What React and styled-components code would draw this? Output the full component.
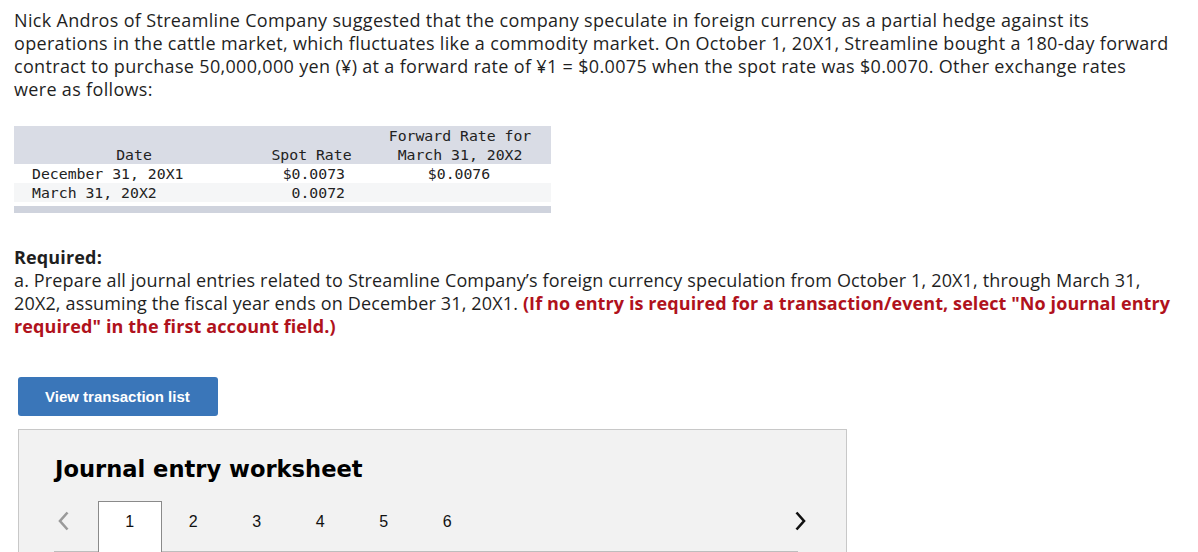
import React from 'react'
import styled, { createGlobalStyle } from 'styled-components'

const GlobalStyle = createGlobalStyle`
  body {
    margin: 0;
    background: #ffffff;
  }
`

const Page = styled.div`
  width: 1198px;
  height: 552px;
  overflow: hidden;
  padding: 9px 0 0 14px;
  box-sizing: border-box;
  font-family: 'Open Sans', Lato, sans-serif;
  color: #1f1f1f;
`

const Paragraph = styled.p`
  margin: 0;
  font-size: 18px;
  line-height: 23px;
  letter-spacing: 0.33px;
  white-space: nowrap;
`

const RatesTable = styled.table`
  margin-top: 25px;
  width: 537px;
  border-collapse: collapse;
  font-family: 'DejaVu Sans Mono', 'Liberation Mono', monospace;
  font-size: 14.8px;
  line-height: 19px;
  color: #222;
  border-bottom: 7px solid #cfd3dd;
`

const HeadRow = styled.tr`
  background: #d9dce5;
`

const HeadCell = styled.th`
  font-weight: normal;
  text-align: center;
  vertical-align: bottom;
  padding: 0;
  width: ${(p) => p.w}px;
`

const BodyRow = styled.tr`
  background: ${(p) => (p.shade ? '#f5f6f7' : '#ffffff')};
`

const Cell = styled.td`
  padding: 0;
  padding-left: ${(p) => p.pl || 0}px;
  padding-right: ${(p) => p.pr || 0}px;
  text-align: ${(p) => p.align || 'left'};
`

const SpacerRow = styled.tr`
  height: 7px;
  background: #ffffff;
`

const Required = styled.div`
  margin-top: 33px;
  font-size: 18px;
  line-height: 23px;
  letter-spacing: 0.15px;
  white-space: nowrap;
`

const Bold = styled.div`
  font-weight: 700;
`

const Red = styled.span`
  color: #b0121c;
  font-weight: 700;
  letter-spacing: 0.1px;
`

const Button = styled.button`
  display: block;
  margin: 39px 0 0 4px;
  width: 200px;
  height: 39px;
  border: none;
  border-radius: 3px;
  background: #3a76b9;
  color: #ffffff;
  font-family: 'Liberation Sans', Arial, sans-serif;
  font-weight: 700;
  font-size: 15px;
  text-align: left;
  padding: 0 0 0 27px;
`

const Worksheet = styled.div`
  margin: 13px 0 0 4px;
  width: 829px;
  height: 200px;
  box-sizing: border-box;
  background: #f2f2f2;
  border: 1px solid #c8c8c8;
  padding: 23px 48px 0 35px;
`

const Title = styled.h2`
  margin: 0 0 0 1px;
  font-family: 'DejaVu Sans', Verdana, sans-serif;
  font-weight: 700;
  font-size: 22.6px;
  line-height: 32px;
  color: #000;
`

const TabBar = styled.div`
  margin-top: 16px;
  display: flex;
  align-items: flex-end;
  height: 50px;
  border-bottom: 1px solid #bdbdbd;
`

const Arrow = styled.div`
  width: 44px;
  height: 50px;
  display: flex;
  align-items: flex-start;
  padding-top: 10px;
  justify-content: ${(p) => (p.right ? 'flex-end' : 'flex-start')};
  padding-left: ${(p) => (p.right ? 0 : 3)}px;
  box-sizing: border-box;
  margin-left: ${(p) => (p.right ? 'auto' : 0)};
  margin-right: ${(p) => (p.right ? '-9px' : 0)};
`

const Tab = styled.div`
  width: 63.5px;
  height: 51px;
  margin-bottom: -1px;
  box-sizing: border-box;
  display: flex;
  align-items: flex-start;
  justify-content: center;
  padding-top: 10px;
  font-family: 'Liberation Sans', Arial, sans-serif;
  font-size: 16px;
  line-height: 19px;
  color: #111;
  background: ${(p) => (p.active ? '#ffffff' : 'transparent')};
  border: 1px solid ${(p) => (p.active ? '#8a8a8a' : 'transparent')};
  border-bottom: none;
`

const Chevron = ({ dir, color }) => (
  <svg width="13" height="20" viewBox="0 0 13 20">
    <path
      d={dir === 'left' ? 'M10.5 1.5 L3 10 L10.5 18.5' : 'M2.5 1.5 L10 10 L2.5 18.5'}
      fill="none"
      stroke={color}
      strokeWidth="2.6"
    />
  </svg>
)

export default function App() {
  return (
    <>
      <GlobalStyle />
      <Page>
        <Paragraph>
          Nick Andros of Streamline Company suggested that the company speculate in foreign currency as a partial hedge against its
          <br />
          operations in the cattle market, which fluctuates like a commodity market. On October 1, 20X1, Streamline bought a 180-day forward
          <br />
          contract to purchase 50,000,000 yen (¥) at a forward rate of ¥1 = $0.0075 when the spot rate was $0.0070. Other exchange rates
          <br />
          were as follows:
        </Paragraph>

        <RatesTable>
          <thead>
            <HeadRow>
              <HeadCell w={240}>
                <br />
                Date
              </HeadCell>
              <HeadCell w={115}>
                <br />
                Spot Rate
              </HeadCell>
              <HeadCell w={182}>
                Forward Rate for
                <br />
                March 31, 20X2
              </HeadCell>
            </HeadRow>
          </thead>
          <tbody>
            <BodyRow>
              <Cell pl={18}>December 31, 20X1</Cell>
              <Cell align="right" pr={24}>$0.0073</Cell>
              <Cell align="center" pr={2}>$0.0076</Cell>
            </BodyRow>
            <BodyRow shade>
              <Cell pl={18}>March 31, 20X2</Cell>
              <Cell align="right" pr={24}>0.0072</Cell>
              <Cell />
            </BodyRow>
            <SpacerRow>
              <td colSpan={3} />
            </SpacerRow>
          </tbody>
        </RatesTable>

        <Required>
          <Bold>Required:</Bold>
          a. Prepare all journal entries related to Streamline Company’s foreign currency speculation from October 1, 20X1, through March 31,
          <br />
          20X2, assuming the fiscal year ends on December 31, 20X1.{' '}
          <Red>(If no entry is required for a transaction/event, select "No journal entry</Red>
          <br />
          <Red>required" in the first account field.)</Red>
        </Required>

        <Button>View transaction list</Button>

        <Worksheet>
          <Title>Journal entry worksheet</Title>
          <TabBar>
            <Arrow>
              <Chevron dir="left" color="#9a9a9a" />
            </Arrow>
            {[1, 2, 3, 4, 5, 6].map((n) => (
              <Tab key={n} active={n === 1}>
                {n}
              </Tab>
            ))}
            <Arrow right>
              <Chevron dir="right" color="#111" />
            </Arrow>
          </TabBar>
        </Worksheet>
      </Page>
    </>
  )
}
